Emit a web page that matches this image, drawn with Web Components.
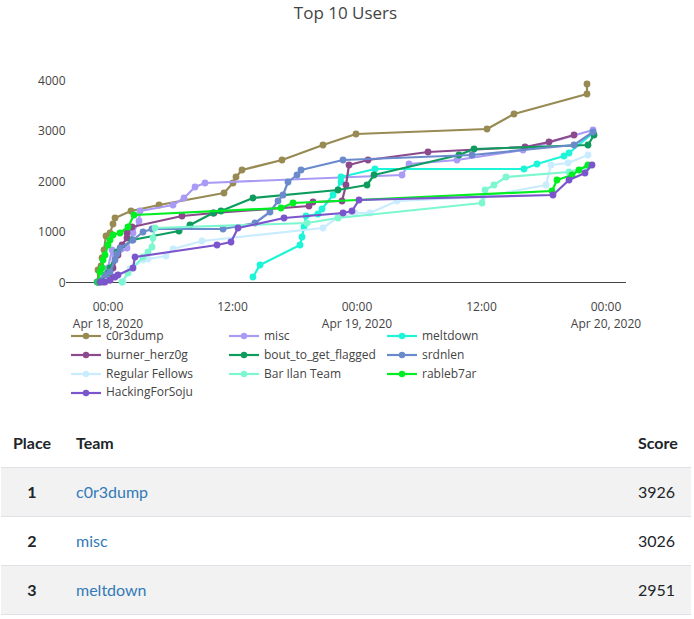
<!DOCTYPE html>
<html><head><meta charset="utf-8">
<style>
html,body{margin:0;padding:0;background:#fff}
body{font-family:"Lato",sans-serif;width:694px;overflow:hidden}
</style></head>
<body>
<score-page>
  <score-chart heading="Top 10 Users"></score-chart>
  <score-table></score-table>
</score-page>
<script>
const TRACES=[
["c0r3dump","#978a52",[[98,282],[98,270],[101,266],[102,258],[104,250],[106,236],[110,233],[113,224],[115,218],[131,211],[159,205],[224,193],[233,183],[236,177],[242,170],[282,160],[323,145],[356,134],[487,129],[514,114],[587,94],[587,84]]],
["misc","#a99bf5",[[98,282],[108,268],[112,250],[115,256],[127,248],[133,233],[139,221],[140,211],[173,205],[184,198],[195,187],[205,183],[402,175],[409,164],[457,160],[523,150],[593,130]]],
["meltdown","#1df5d8",[[253,277],[260,265],[300,245],[302,237],[304,227],[306,216],[318,214],[322,209],[333,195],[341,182],[341,177],[375,169],[524,169],[537,164],[564,156],[569,153],[593,133]]],
["burner_herz0g","#8c4a8c",[[103,282],[110,280],[113,268],[118,255],[122,245],[127,238],[127,233],[132,227],[182,216],[214,213],[309,206],[313,202],[342,201],[346,185],[349,165],[368,160],[428,152],[525,147],[549,142],[574,135]]],
["bout_to_get_flagged","#0e9c5e",[[100,282],[108,273],[110,268],[117,252],[132,240],[179,231],[190,225],[213,213],[221,211],[253,198],[338,190],[367,185],[374,175],[459,155],[474,149],[588,145],[594,135]]],
["srdnlen","#6b8acc",[[97,282],[105,275],[110,272],[115,260],[117,254],[120,248],[133,240],[143,232],[152,229],[223,229],[255,223],[270,212],[278,201],[283,195],[288,182],[297,175],[301,170],[343,160],[472,155],[574,145],[593,132]]],
["Regular Fellows","#c9ecff",[[123,282],[130,269],[143,260],[148,259],[166,256],[173,249],[202,241],[323,228],[338,217],[355,213],[370,213],[397,201],[483,197],[546,185],[551,165],[568,163],[588,155]]],
["Bar Ilan Team","#7df7d0",[[122,282],[128,273],[143,257],[148,252],[152,247],[153,238],[155,228],[307,223],[338,218],[482,203],[485,190],[494,185],[506,177],[569,172],[587,167]]],
["rableb7ar","#00ee22",[[98,282],[100,272],[102,268],[103,260],[105,255],[108,245],[110,240],[113,235],[120,233],[128,227],[134,215],[281,208],[293,203],[552,191],[557,180],[572,175],[579,170],[588,165]]],
["HackingForSoju","#7b55cc",[[100,282],[105,282],[110,280],[115,277],[118,275],[133,268],[135,257],[217,245],[231,242],[238,228],[284,218],[343,213],[352,211],[359,200],[553,195],[569,180],[585,173],[592,165]]]
];
class ScorePage extends HTMLElement{
  constructor(){super();this.attachShadow({mode:"open"}).innerHTML=`<style>:host{display:flex;flex-direction:column;width:694px}</style><slot></slot>`}
}
class ScoreChart extends HTMLElement{
  constructor(){
    super();
    const yt=[[4000,80.5],[3000,130.5],[2000,181],[1000,231.5],[0,282]];
    const xt=[[108,"00:00","Apr 18, 2020"],[232.5,"12:00",""],[357,"00:00","Apr 19, 2020"],[481.5,"12:00",""],[606,"00:00","Apr 20, 2020"]];
    const series=TRACES.map(([n,c,p])=>`<polyline points="${p.map(a=>a.join(",")).join(" ")}" fill="none" stroke="${c}" stroke-width="2.2" stroke-linejoin="round"/>`+p.map(a=>`<circle cx="${a[0]}" cy="${a[1]}" r="3.4" fill="${c}"/>`).join("")).join("");
    const legend=TRACES.map(([n,c])=>`<div class="it"><svg width="30" height="8" viewBox="0 0 30 8"><line x1="0" y1="4" x2="30" y2="4" stroke="${c}" stroke-width="2.2"/><circle cx="15" cy="4" r="3.2" fill="${c}"/></svg><span>${n}</span></div>`).join("");
    this.attachShadow({mode:"open"}).innerHTML=`<style>
:host{display:block;font-family:"Open Sans",sans-serif;color:#444}
h2{margin:0;height:26px;font-weight:400;font-size:17px;line-height:25px;text-align:center;color:#444;padding-right:3px;box-sizing:border-box}
svg.plot{display:block}
text{font-family:"Open Sans",sans-serif;font-size:12px;fill:#444}
.lg{display:grid;grid-template-columns:158px 158px 158px;grid-auto-rows:18.9px;margin:-5.2px 0 0 71px;font-size:12px;line-height:18.9px}
.it{display:flex;align-items:center;gap:5px;white-space:nowrap}
.it svg{flex:none}
</style>
<h2>${this.getAttribute("heading")}</h2>
<svg class="plot" width="694" height="306" viewBox="0 26 694 306">
<line x1="66" x2="626" y1="282.5" y2="282.5" stroke="#444" stroke-width="1"/>
${yt.map(([v,y])=>`<text x="65.5" y="${y+4.5}" text-anchor="end">${v}</text>`).join("")}
${xt.map(([x,a,b])=>`<text x="${x}" y="310.5" text-anchor="middle">${a}</text>`+(b?`<text x="${x}" y="327.5" text-anchor="middle">${b}</text>`:"")).join("")}
${series}
</svg>
<div class="lg">${legend}</div>`;
  }
}
class ScoreTable extends HTMLElement{
  constructor(){
    super();
    const rows=[[1,"c0r3dump",3926],[2,"misc",3026],[3,"meltdown",2951]];
    this.attachShadow({mode:"open"}).innerHTML=`<style>
:host{display:block;margin:16.5px 3px 0 1px;font-family:"Lato",sans-serif;font-size:16px;line-height:24px;color:#212529}
table{border-collapse:collapse;width:100%;table-layout:fixed}
th,td{padding:12px;text-align:left;box-sizing:border-box}
th{font-weight:700;border-bottom:1px solid #dee2e6}
td{border-bottom:1px solid #dee2e6}
th:first-child,td:first-child{width:63px;text-align:center;padding-left:11px;padding-right:12px}
td:first-child{font-weight:700}
th:last-child,td:last-child{width:65px;padding-right:0}
tbody tr:nth-child(odd){background:#f2f2f2}
a{color:#337ab7;text-decoration:none}
</style>
<table><thead><tr><th>Place</th><th>Team</th><th>Score</th></tr></thead>
<tbody>${rows.map(r=>`<tr><td>${r[0]}</td><td><a href="#">${r[1]}</a></td><td>${r[2]}</td></tr>`).join("")}</tbody></table>`;
  }
}
customElements.define("score-page",ScorePage);
customElements.define("score-chart",ScoreChart);
customElements.define("score-table",ScoreTable);
</script>
</body></html>
